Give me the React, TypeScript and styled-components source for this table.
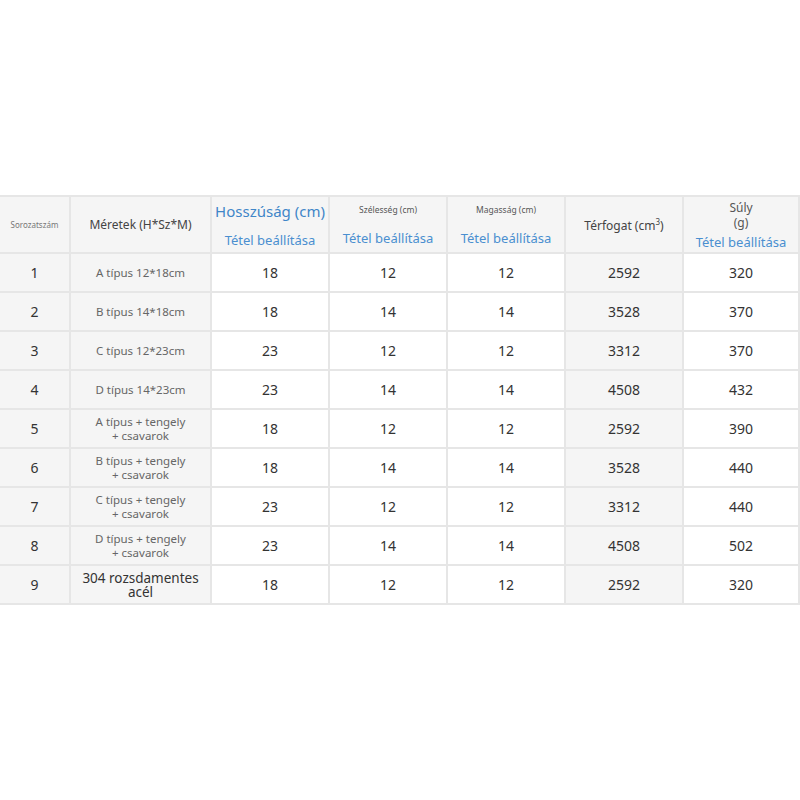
import React from "react";
import styled, { createGlobalStyle } from "styled-components";

const Global = createGlobalStyle`
  html, body { margin: 0; padding: 0; background: #fff; }
  body { font-family: "Noto Sans", "Open Sans", sans-serif; }
`;

const Page = styled.div`
  width: 800px;
  height: 800px;
  padding-top: 195px;
  box-sizing: border-box;
  background: #fff;
`;

const Table = styled.table`
  width: 799px;
  border-collapse: collapse;
  table-layout: fixed;
  border-top: 2px solid #e6e6e6;
  border-bottom: 2px solid #e6e6e6;
`;

const HeadRow = styled.tr`
  height: 57px;
`;

const BodyRow = styled.tr`
  height: 39px;
`;

const Th = styled.th`
  background: #f5f5f5;
  border-left: 2px solid #e6e6e6;
  border-right: 2px solid #e6e6e6;
  border-bottom: 2px solid #e6e6e6;
  padding: 0;
  text-align: center;
  vertical-align: middle;
  font-weight: 400;
  color: #444;
  &:first-child { border-left: none; }
`;

const Td = styled.td<{ $shade?: boolean }>`
  background: ${(p) => (p.$shade ? "#f5f5f5" : "#fff")};
  border: 2px solid #e6e6e6;
  padding: 0;
  text-align: center;
  vertical-align: middle;
  font-size: 14px;
  color: #333;
  line-height: 1.1;
  &:first-child { border-left: none; }
`;

const Tiny = styled.div`
  font-size: 8px;
  color: #777;
`;

const Small = styled.div`
  font-size: 8.5px;
  color: #555;
  line-height: 12px;
`;

const Mid = styled.div`
  font-size: 12px;
  color: #444;
`;

const Title = styled.div`
  font-size: 15px;
  color: #3f86c8;
  line-height: 18px;
`;

const Link = styled.div<{ $gap?: number }>`
  font-size: 13px;
  color: #4a8fd0;
  margin-top: ${(p) => p.$gap ?? 0}px;
  line-height: 16px;
`;

const Size = styled.div<{ $dark?: boolean }>`
  font-size: ${(p) => (p.$dark ? 13.5 : 11.5)}px;
  color: ${(p) => (p.$dark ? "#333" : "#666")};
  line-height: 14px;
`;

const Num = styled.span`
  font-size: 14px;
  color: #333;
`;

const Index = styled.span`
  font-size: 14px;
  color: #333;
`;

const Weight = styled.div`
  font-size: 12px;
  color: #555;
  line-height: 15px;
`;

const rows: [string[], string, string, string, string, string][] = [
  [["A típus 12*18cm"], "18", "12", "12", "2592", "320"],
  [["B típus 14*18cm"], "18", "14", "14", "3528", "370"],
  [["C típus 12*23cm"], "23", "12", "12", "3312", "370"],
  [["D típus 14*23cm"], "23", "14", "14", "4508", "432"],
  [["A típus + tengely", "+ csavarok"], "18", "12", "12", "2592", "390"],
  [["B típus + tengely", "+ csavarok"], "18", "14", "14", "3528", "440"],
  [["C típus + tengely", "+ csavarok"], "23", "12", "12", "3312", "440"],
  [["D típus + tengely", "+ csavarok"], "23", "14", "14", "4508", "502"],
  [["304 rozsdamentes", "acél"], "18", "12", "12", "2592", "320"],
];

export default function App() {
  return (
    <Page>
      <Global />
      <Table>
        <colgroup>
          <col style={{ width: 70 }} />
          <col style={{ width: 141 }} />
          <col style={{ width: 118 }} />
          <col style={{ width: 118 }} />
          <col style={{ width: 118 }} />
          <col style={{ width: 118 }} />
          <col style={{ width: 116 }} />
        </colgroup>
        <thead>
          <HeadRow>
            <Th>
              <Tiny>Sorozatszám</Tiny>
            </Th>
            <Th>
              <Mid>Méretek (H*Sz*M)</Mid>
            </Th>
            <Th>
              <Title>Hosszúság (cm)</Title>
              <Link $gap={12}>Tétel beállítása</Link>
            </Th>
            <Th>
              <Small>Szélesség (cm)</Small>
              <Link $gap={14}>Tétel beállítása</Link>
            </Th>
            <Th>
              <Small>Magasság (cm)</Small>
              <Link $gap={14}>Tétel beállítása</Link>
            </Th>
            <Th>
              <Mid>
                Térfogat (cm<sup style={{ fontSize: 8 }}>3</sup>)
              </Mid>
            </Th>
            <Th>
              <Weight>Súly</Weight>
              <Weight>(g)</Weight>
              <Link $gap={4}>Tétel beállítása</Link>
            </Th>
          </HeadRow>
        </thead>
        <tbody>
          {rows.map(([size, l, w, h, v, g], i) => (
            <BodyRow key={i}>
              <Td $shade>
                <Index>{i + 1}</Index>
              </Td>
              <Td $shade>
                {size.map((s) => (
                  <Size key={s} $dark={i === 8}>
                    {s}
                  </Size>
                ))}
              </Td>
              <Td>
                <Num>{l}</Num>
              </Td>
              <Td>
                <Num>{w}</Num>
              </Td>
              <Td>
                <Num>{h}</Num>
              </Td>
              <Td $shade>
                <Num>{v}</Num>
              </Td>
              <Td>
                <Num>{g}</Num>
              </Td>
            </BodyRow>
          ))}
        </tbody>
      </Table>
    </Page>
  );
}
